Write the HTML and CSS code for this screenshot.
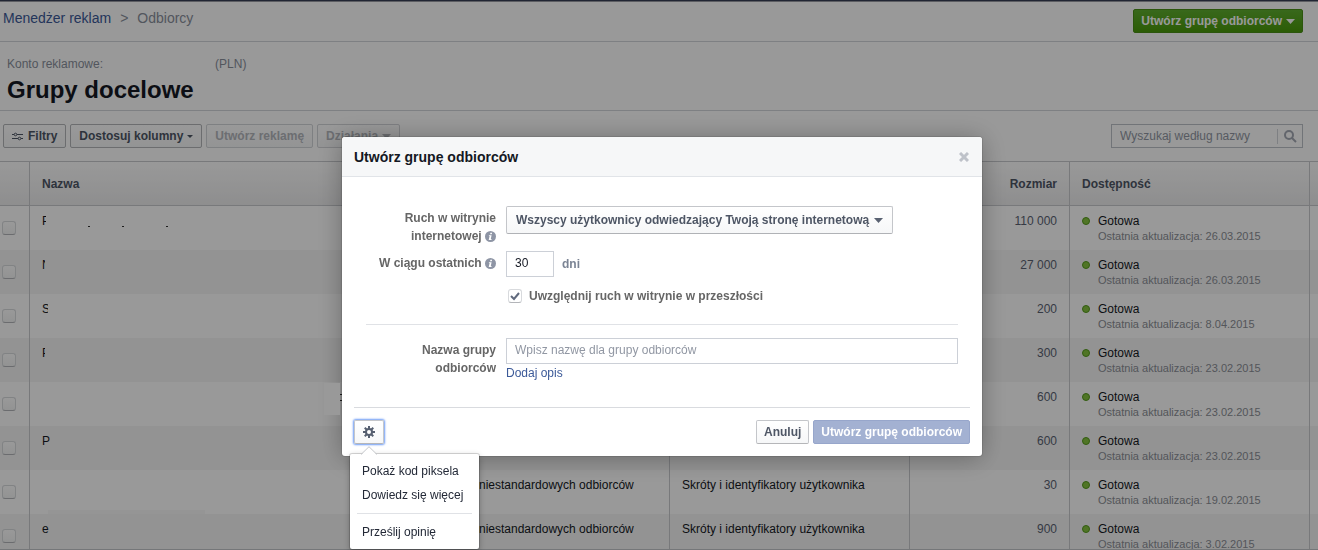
FILE: index.html
```html
<!DOCTYPE html>
<html lang="pl">
<head>
<meta charset="utf-8">
<title>Grupy docelowe</title>
<link rel="stylesheet" href="styles.css">
</head>
<body>
<div class="page">
  <header class="topbar">
    <nav class="crumbs"><a href="#">Menedżer reklam</a><span>&gt;</span><span>Odbiorcy</span></nav>
    <button class="btn btn-green" type="button">Utwórz grupę odbiorców<svg class="caret" width="9" height="5" viewBox="0 0 9 5"><path d="M0 0h9L4.500 5z"/></svg></button>
  </header>
  <section class="account">
    <p class="account-line"><span>Konto reklamowe:</span><span>(PLN)</span></p>
    <h1>Grupy docelowe</h1>
  </section>
  <div class="toolbar">
    <button class="btn" type="button"><svg class="sliders" width="11" height="9" viewBox="0 0 11 9"><path d="M0 2.500h2M5 2.500h6M0 6.500h6M9 6.500h2"/><circle cx="3.500" cy="2.500" r="1.300"/><circle cx="7.500" cy="6.500" r="1.300"/></svg>Filtry</button>
    <button class="btn" type="button">Dostosuj kolumny<svg class="caret" width="6" height="3" viewBox="0 0 6 3"><path d="M0 0h6L3 3z"/></svg></button>
    <button class="btn" type="button" disabled>Utwórz reklamę</button>
    <button class="btn" type="button" disabled>Działania<svg class="caret" width="9" height="5" viewBox="0 0 9 5"><path d="M0 0h9L4.500 5z"/></svg></button>
    <form class="search">
      <input type="text" placeholder="Wyszukaj według nazwy" aria-label="Wyszukaj według nazwy">
      <button type="button" aria-label="Szukaj"><svg width="13" height="13" viewBox="0 0 13 13"><circle cx="5" cy="5" r="4"/><path d="M8 8l4 4"/></svg></button>
    </form>
  </div>
  <div class="table-wrap">
    <table>
      <colgroup><col class="c-check"><col class="c-name"><col class="c-mid"><col class="c-mid"><col class="c-size"><col class="c-mid"><col></colgroup>
      <thead>
        <tr><th></th><th>Nazwa</th><th></th><th></th><th class="num">Rozmiar</th><th>Dostępność</th><th></th></tr>
      </thead>
      <tbody>
        <tr><td><input type="checkbox" aria-label="Wiersz 1"></td><td><span class="cut cut-4">P</span><i class="speck speck-a"></i><i class="speck speck-b"></i><i class="speck speck-c"></i></td><td></td><td></td><td class="num">110 000</td><td class="status">Gotowa<small>Ostatnia aktualizacja: 26.03.2015</small></td><td></td></tr>
        <tr><td><input type="checkbox" aria-label="Wiersz 2"></td><td><span class="cut cut-3">N</span></td><td></td><td></td><td class="num">27 000</td><td class="status">Gotowa<small>Ostatnia aktualizacja: 26.03.2015</small></td><td></td></tr>
        <tr><td><input type="checkbox" aria-label="Wiersz 3"></td><td><span class="cut cut-6">S</span></td><td></td><td></td><td class="num">200</td><td class="status">Gotowa<small>Ostatnia aktualizacja: 8.04.2015</small></td><td></td></tr>
        <tr><td><input type="checkbox" aria-label="Wiersz 4"></td><td><span class="cut cut-3">P</span></td><td></td><td></td><td class="num">300</td><td class="status">Gotowa<small>Ostatnia aktualizacja: 23.02.2015</small></td><td></td></tr>
        <tr><td><input type="checkbox" aria-label="Wiersz 5"></td><td><i class="speck speck-d"></i><i class="speck speck-e"></i></td><td></td><td></td><td class="num">600</td><td class="status">Gotowa<small>Ostatnia aktualizacja: 23.02.2015</small></td><td></td></tr>
        <tr><td><input type="checkbox" aria-label="Wiersz 6"></td><td>P</td><td></td><td></td><td class="num">600</td><td class="status">Gotowa<small>Ostatnia aktualizacja: 23.02.2015</small></td><td></td></tr>
        <tr><td><input type="checkbox" aria-label="Wiersz 7"></td><td><i class="strip"></i></td><td class="kind">niestandardowych odbiorców</td><td>Skróty i identyfikatory użytkownika</td><td class="num">30</td><td class="status">Gotowa<small>Ostatnia aktualizacja: 19.02.2015</small></td><td></td></tr>
        <tr><td><input type="checkbox" aria-label="Wiersz 8"></td><td>e</td><td class="kind">niestandardowych odbiorców</td><td>Skróty i identyfikatory użytkownika</td><td class="num">900</td><td class="status">Gotowa<small>Ostatnia aktualizacja: 3.02.2015</small></td><td></td></tr>
      </tbody>
    </table>
  </div>
</div>

<div class="overlay">
  <div class="dialog" role="dialog" aria-labelledby="dialog-title">
    <i class="patch"></i>
    <div class="dialog-head">
      <h2 id="dialog-title">Utwórz grupę odbiorców</h2>
      <button class="close" type="button" aria-label="Zamknij"><svg width="10" height="10" viewBox="0 0 10 10"><path d="M1 1l8 8M9 1L1 9"/></svg></button>
    </div>
    <form class="dialog-body">
      <div class="field field-select">
        <label for="traffic">Ruch w witrynie internetowej <svg class="info" width="11" height="11" viewBox="0 0 11 11"><circle cx="5.500" cy="5.500" r="5.500"/><path d="M5.400 1.800h1.700l-.3 1.500H5.100zM4 4.200h2.600L5.800 8h.8l-.2 1H3.700l.9-3.900h-.8z"/></svg></label>
        <div class="select">
          <select id="traffic"><option>Wszyscy użytkownicy odwiedzający Twoją stronę internetową</option></select>
          <svg class="caret" width="9" height="5" viewBox="0 0 9 5"><path d="M0 0h9L4.500 5z"/></svg>
        </div>
      </div>
      <div class="field field-days">
        <label for="days">W ciągu ostatnich <svg class="info" width="11" height="11" viewBox="0 0 11 11"><circle cx="5.500" cy="5.500" r="5.500"/><path d="M5.400 1.800h1.700l-.3 1.500H5.100zM4 4.200h2.600L5.800 8h.8l-.2 1H3.700l.9-3.900h-.8z"/></svg></label>
        <div class="days"><input id="days" class="text" type="text" value="30"><span>dni</span></div>
      </div>
      <div class="past"><input id="past" type="checkbox" checked><label for="past">Uwzględnij ruch w witrynie w przeszłości</label></div>
      <hr>
      <div class="field field-name">
        <label for="name">Nazwa grupy odbiorców</label>
        <div class="name"><input id="name" class="text" type="text" placeholder="Wpisz nazwę dla grupy odbiorców"><a href="#">Dodaj opis</a></div>
      </div>
    </form>
    <div class="dialog-foot">
      <div class="gear-wrap">
        <button class="btn gear" type="button" aria-label="Opcje"><svg width="12" height="12" viewBox="-6 -6 12 12"><path d="M-1-6h2v12h-2z"/><path d="M-1-6h2v12h-2z" transform="rotate(45)"/><path d="M-1-6h2v12h-2z" transform="rotate(90)"/><path d="M-1-6h2v12h-2z" transform="rotate(135)"/><circle r="4"/><circle class="hole" r="2"/></svg></button>
        <div class="menu">
          <svg class="nub" width="16" height="9" viewBox="0 0 16 9"><path class="nub-fill" d="M0 9L8 1l8 8z"/><path class="nub-line" d="M0 8.500L8 .7l8 7.800"/></svg>
          <a href="#">Pokaż kod piksela</a>
          <a href="#">Dowiedz się więcej</a>
          <hr>
          <a href="#">Prześlij opinię</a>
        </div>
      </div>
      <button class="btn" type="button">Anuluj</button>
      <button class="btn btn-primary" type="button">Utwórz grupę odbiorców</button>
    </div>
  </div>
</div>
</body>
</html>
```
FILE: styles.css
```css
*, *::before { box-sizing: border-box; }

body {
  margin: 0;
  font: 12px/16px "Liberation Sans", Arial, sans-serif;
  color: #141823;
  background: #fff;
}

a { color: #3b5998; text-decoration: none; }
button, input, select { font: inherit; color: inherit; margin: 0; }
svg { flex: none; }

.page {
  display: flex;
  flex-direction: column;
  height: 100vh;
  overflow: hidden;
  border-top: 1px solid #373e56;
}

.topbar {
  display: flex;
  justify-content: space-between;
  align-items: flex-start;
  padding: 7px 15px 8px 3px;
  border-top: 1px solid #9a9ca3;
  border-bottom: 1px solid #d3d6db;
}

.crumbs { display: flex; gap: 9px; font-size: 14px; line-height: 18px; color: #898f9c; }

.account { padding: 14px 7px 6px; border-bottom: 1px solid #d3d6db; }
.account-line { display: flex; gap: 112px; margin: 0; color: #898f9c; }
h1 { margin: 3px 0 0; font-size: 24px; line-height: 29px; }

.toolbar { display: flex; gap: 4px; padding: 13px 15px 13px 3px; }

.btn {
  display: flex;
  align-items: center;
  height: 24px;
  padding: 0 7px;
  font-weight: bold;
  white-space: nowrap;
  color: #4e5665;
  background: linear-gradient(#fff, #f6f7f8);
  border: 1px solid #c4c6ca;
  border-bottom-color: #b5b6b9;
  border-radius: 2px;
}
.toolbar .btn { padding: 0 8px; border-color: #b4b6ba; }
.toolbar .btn:disabled { padding: 0 8px; color: #b4b7bd; border-color: #d3d5d9; }
.caret { margin-left: 4px; fill: currentColor; }
.sliders { margin: 0 5px 0 0; fill: none; stroke: currentColor; }

.btn-green {
  color: #fff;
  background: linear-gradient(#5fae2f, #4a9a0a);
  border-color: #4a8f16;
}

.search {
  display: flex;
  align-items: center;
  width: 192px;
  height: 24px;
  margin-left: auto;
  border: 1px solid #bdc1c9;
}
.search input {
  flex: 1;
  min-width: 0;
  padding: 0 8px;
  border: 0;
  outline: 0;
  background: none;
}
.search button {
  display: flex;
  padding: 1px 5px 1px 6px;
  background: none;
  border: 0;
  border-left: 1px solid #d3d6db;
}
.search svg { fill: none; stroke: #a4a9b4; stroke-width: 2; }
::placeholder { color: #9197a3; opacity: 1; }

.table-wrap { flex: 1; min-height: 0; overflow: hidden; border-bottom: 1px solid #c4c6ca; }
table { width: 100%; table-layout: fixed; border-collapse: separate; border-spacing: 0; }
.c-check { width: 30px; }
.c-name { width: 400px; }
.c-mid { width: 240px; }
.c-size { width: 160px; }
th, td { height: 44px; padding: 0 12px; text-align: left; border-right: 1px solid #c8cace; }
th:last-child, td:last-child { padding: 0; border-right: 0; }
th {
  height: 45px;
  color: #4e5665;
  background: linear-gradient(#fff, #ededee);
  border-top: 1px solid #c8cace;
  border-bottom: 1px solid #c8cace;
}
td { position: relative; padding-top: 7px; vertical-align: top; white-space: nowrap; }
td:first-child { padding: 15px 2px 0; }
tr:nth-child(even) td { background: #f6f6f6; }
.num { text-align: right; }
td.num { color: #5a6272; }
td.kind { padding-left: 49px; }
td.status { padding-left: 28px; }
.status::before {
  content: "";
  position: absolute;
  left: 12px;
  top: 11px;
  width: 8px;
  height: 8px;
  background: #86c440;
  border: 1px solid #549a1c;
  border-radius: 50%;
}
small { display: block; font-size: 11px; line-height: 15px; color: #8c8f96; }

input[type="checkbox"] {
  display: block;
  appearance: none;
  width: 14px;
  height: 14px;
  background: linear-gradient(#fff, #f4f5f5);
  border: 1px solid #d8dadd;
  border-bottom-color: #b3b5b9;
  border-radius: 3px;
}

.cut { display: block; overflow: hidden; }
.cut-3 { width: 3px; }
.cut-4 { width: 4px; }
.cut-6 { width: 6px; }
.speck { position: absolute; top: 20px; width: 2px; height: 1px; background: #333; }
.speck-a { left: 58px; }
.speck-b { left: 92px; }
.speck-c { left: 136px; }
.speck-d { left: 310px; top: 12px; }
.speck-e { left: 310px; top: 18px; }
.strip { position: absolute; left: 18px; bottom: 0; width: 157px; height: 4px; background: #f8f8f8; }

.overlay {
  position: fixed;
  inset: 0;
  display: flex;
  justify-content: center;
  align-items: flex-start;
  padding: 137px 0 0 6px;
  background: rgba(0, 0, 0, .4);
}

.dialog {
  position: relative;
  width: 640px;
  background: #fff;
  border-radius: 3px;
  box-shadow: 0 2px 26px rgba(0, 0, 0, .3), 0 0 0 1px rgba(0, 0, 0, .1);
}
.patch {
  position: absolute;
  left: -18px;
  top: 246px;
  width: 16px;
  height: 32px;
  background: #999;
}
.dialog-head {
  display: flex;
  justify-content: space-between;
  align-items: center;
  height: 40px;
  padding: 0 12px;
  background: #f6f7f8;
  border-bottom: 1px solid #e1e4e8;
  border-radius: 3px 3px 0 0;
}
h2 { margin: 0; font-size: 14px; line-height: 18px; }
.close { display: flex; padding: 0 1px; background: none; border: 0; }
.close svg { fill: none; stroke: #bec2c9; stroke-width: 3; }

.dialog-body { padding: 29px 24px 26px; font-weight: bold; color: #666; }
.field { display: grid; grid-template-columns: 130px 1fr; column-gap: 10px; align-items: start; }
.field label { line-height: 18px; text-align: right; }
.field-select label { padding: 3px 0 0 20px; }
.info { vertical-align: -2px; fill: #8e95a5; }
.info path { fill: #fff; }

.select { position: relative; justify-self: start; }
.select select {
  display: block;
  appearance: none;
  height: 28px;
  padding: 0 22px 0 9px;
  font-weight: bold;
  color: #4e5665;
  background: linear-gradient(#fff, #f6f7f8);
  border: 1px solid #c4c6ca;
  border-bottom-color: #b0b2b6;
  border-radius: 2px;
}
.select .caret { position: absolute; right: 10px; top: 12px; fill: #5a6272; }

.text {
  display: block;
  height: 26px;
  padding: 0 8px 2px;
  font-weight: 400;
  color: #141823;
  background: #fff;
  border: 1px solid #ccd0d7;
}
.field-days { margin-top: 6px; }
.field-days label { padding-top: 3px; }
.days { display: flex; align-items: center; gap: 8px; color: #7b8494; }
.days .text { width: 48px; }

.past { display: flex; align-items: center; gap: 7px; margin: 11px 0 0 142px; }
.past input[type="checkbox"] {
  background: url("data:image/svg+xml,%3Csvg xmlns='http://www.w3.org/2000/svg' viewBox='0 0 12 12'%3E%3Cpath d='M2 6l3 3 5-6' fill='none' stroke='%23616a7e' stroke-width='2'/%3E%3C/svg%3E") center / 12px no-repeat;
}
hr { margin: 20px 0 13px; border: 0; border-top: 1px solid #e0e2e6; }
.field-name label { padding: 3px 0 0 50px; }
.name .text { width: 100%; }
.name a { display: inline-block; margin-top: 1px; font-weight: 400; }

.dialog-foot {
  display: flex;
  gap: 4px;
  margin: 0 12px;
  padding: 12px 0;
  border-top: 1px solid #d9dbdf;
}
.btn-primary { color: #fff; background: #a3b1d2; border-color: #97a6cb; }
.gear-wrap { position: relative; margin-right: auto; }
.gear { width: 30px; justify-content: center; padding: 0; box-shadow: 0 0 2px 1px #6e9cf5; }
.gear svg { fill: #565f70; }
.gear .hole { fill: #fff; }

.menu {
  position: absolute;
  top: 34px;
  left: -4px;
  padding: 5px 0;
  width: 129px;
  background: #fff;
  border-radius: 2px;
  box-shadow: 0 0 0 1px rgba(0, 0, 0, .15), 0 2px 6px rgba(0, 0, 0, .3);
}
.menu a { display: block; padding: 4px 12px; line-height: 16px; color: #232937; white-space: nowrap; }
.menu hr { margin: 6px 7px; }
.nub { position: absolute; left: 11px; top: -8px; }
.nub-fill { fill: #fff; }
.nub-line { fill: none; stroke: #c4c6ca; }
```
